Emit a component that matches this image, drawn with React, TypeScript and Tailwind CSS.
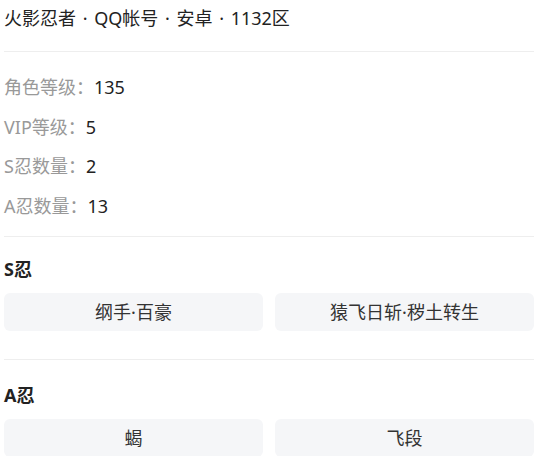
import React from "react";

const stats = [
  { label: "角色等级：", value: "135" },
  { label: "VIP等级：", value: "5" },
  { label: "S忍数量：", value: "2" },
  { label: "A忍数量：", value: "13" },
];

const groups = [
  { title: "S忍", items: ["纲手·百豪", "猿飞日斩·秽土转生"] },
  { title: "A忍", items: ["蝎", "飞段"] },
];

const Dot = () => <span className="mx-[2px]"> · </span>;

const App = () => {
  return (
    <div
      className="w-[550px] h-[456px] overflow-hidden bg-white pl-1 pr-4 text-[#333]"
      style={{ fontFamily: '"Noto Sans", "Noto Sans CJK SC", sans-serif' }}
    >
      {/* account line */}
      <div className="h-[52px] flex items-start pt-[5px] text-[18px] leading-[26px] text-[#222] border-b border-[#eeeeee] whitespace-pre">
        火影忍者<Dot />QQ帐号<Dot />安卓<Dot />1132区
      </div>

      {/* stats */}
      <div className="flex flex-col pt-[16px] pb-[10px] border-b border-[#eeeeee]">
        {stats.map((s) => (
          <div key={s.label} className="h-[39.5px] flex items-center text-[18px]">
            <span className="text-[#999]">{s.label}</span>
            <span className="text-[#222]">{s.value}</span>
          </div>
        ))}
      </div>

      {groups.map((g, i) => (
        <div
          key={g.title}
          className={
            i === 0
              ? "pt-[19px] pb-[28px] border-b border-[#eeeeee]"
              : "pt-[22px]"
          }
        >
          <div className="text-[18px] font-bold leading-[26px] text-[#222]">{g.title}</div>
          <div className="grid grid-cols-2 gap-3 mt-[11px]">
            {g.items.map((it) => (
              <div
                key={it}
                className="h-[38px] flex items-center justify-center rounded-md bg-[#f5f6f8] text-[18px] text-[#333]"
              >
                {it}
              </div>
            ))}
          </div>
        </div>
      ))}
    </div>
  );
};

export default App;
